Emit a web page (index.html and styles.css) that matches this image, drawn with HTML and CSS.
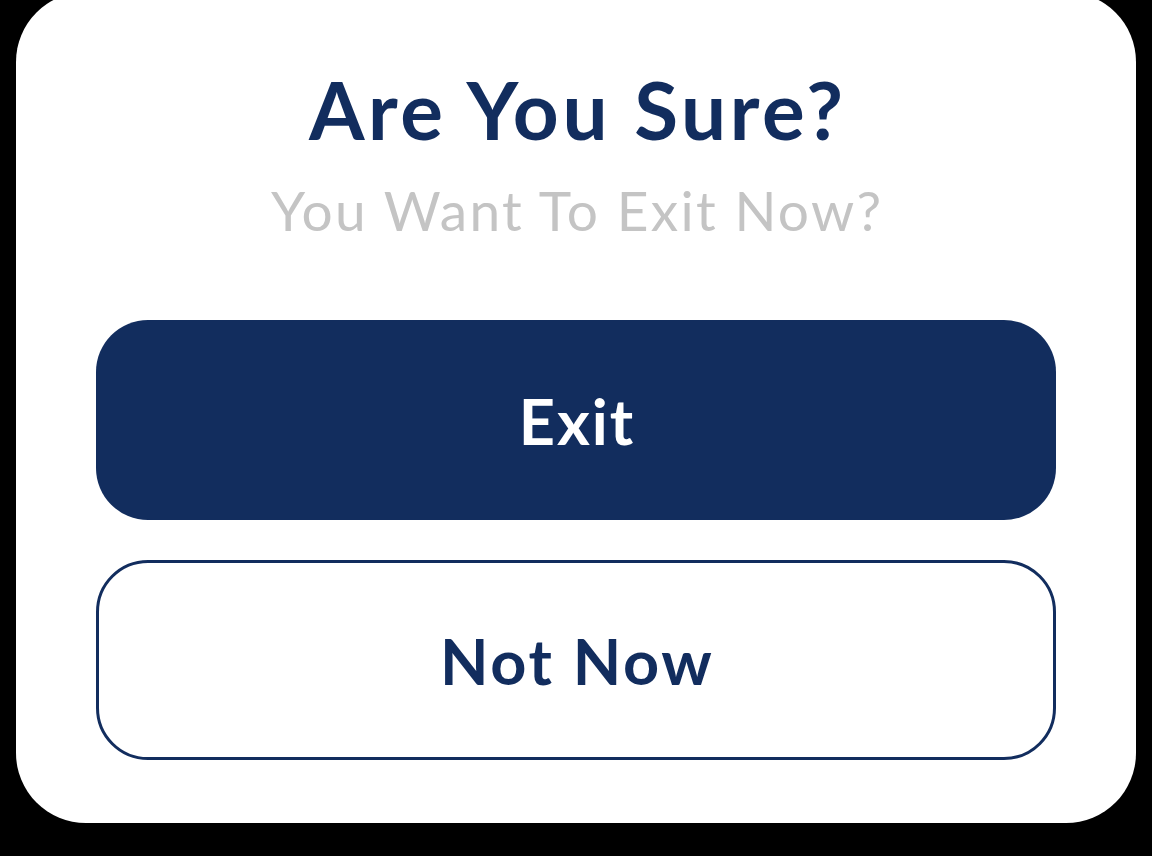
FILE: index.html
```html
<!DOCTYPE html>
<html>
<head>
<meta charset="utf-8">
<link rel="stylesheet" href="styles.css">
</head>
<body>
<div class="card">
  <h1 class="title">Are You Sure?</h1>
  <p class="subtitle">You Want To Exit Now?</p>
  <button class="btn btn-primary">Exit</button>
  <button class="btn btn-outline">Not Now</button>
</div>
</body>
</html>
```
FILE: styles.css
```css
html, body {
  margin: 0;
  padding: 0;
  background: #000;
  height: 100%;
  overflow: hidden;
}
.card {
  margin: -8px 0 0 16px;
  width: 1120px;
  height: 831px;
  box-sizing: border-box;
  background: #fff;
  border-radius: 70px;
  display: flex;
  flex-direction: column;
  align-items: center;
  padding-top: 77px;
  font-family: Lato, "Open Sans", sans-serif;
}
.title {
  margin: 0;
  font-size: 80px;
  line-height: 80px;
  font-weight: 700;
  letter-spacing: 3.6px;
  padding-left: 3.6px;
  color: #122d5e;
}
.subtitle {
  margin: 34px 0 0;
  font-size: 55px;
  line-height: 55px;
  font-weight: 400;
  letter-spacing: 2.3px;
  padding-left: 2.3px;
  color: #c4c4c4;
}
.btn {
  width: 960px;
  height: 200px;
  box-sizing: border-box;
  border-radius: 52px;
  font-family: Lato, "Open Sans", sans-serif;
  font-size: 63px;
  font-weight: 700;
  display: flex;
  align-items: center;
  justify-content: center;
  padding: 0;
}
.btn-primary {
  margin-top: 82px;
  background: #122d5e;
  color: #fff;
  border: none;
  letter-spacing: 2px;
  padding-left: 2px;
}
.btn-outline {
  margin-top: 40px;
  background: #fff;
  color: #122d5e;
  border: 3.5px solid #122d5e;
  letter-spacing: 2.7px;
  padding-left: 2.7px;
}
```
